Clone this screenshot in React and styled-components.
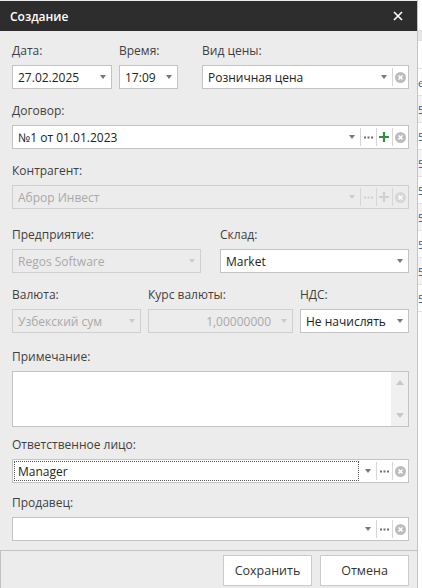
import React from "react";
import styled, { createGlobalStyle } from "styled-components";

const GlobalStyle = createGlobalStyle`
	html, body {
		margin: 0;
		padding: 0;
		background: #fff;
	}
	body {
		font-family: "Open Sans", "Noto Sans", sans-serif;
		font-size: 12px;
		color: #333;
	}
`;

const S = {
	Page: styled.div`
		display: flex;
		width: 422px;
		height: 588px;
		overflow: hidden;
	`,

	Dialog: styled.div`
		width: 418px;
		flex-shrink: 0;
		display: flex;
		flex-direction: column;
		background: #ececec;
		border-right: 1px solid #c4c4c4;
		padding-top: 1px;
		box-sizing: border-box;
	`,

	Header: styled.div`
		height: 30px;
		background: #2d2d2d;
		display: flex;
		align-items: center;
		justify-content: space-between;
		padding: 0 14px 0 10px;
		color: #fff;
		font-weight: 600;
		font-size: 12px;
	`,

	Close: styled.svg`
		width: 10px;
		height: 10px;
	`,

	Body: styled.div`
		display: flex;
		flex-direction: column;
		padding: 12px 8px 9px 12px;
	`,

	Row: styled.div`
		display: grid;
		grid-template-columns: ${(p) => p.$cols || "1fr"};
		column-gap: ${(p) => p.$gap || 7}px;
		margin-top: ${(p) => p.$mt ?? 14}px;
	`,

	Field: styled.div`
		display: flex;
		flex-direction: column;
		min-width: 0;
		margin-left: ${(p) => p.$offset || 0}px;
	`,

	Label: styled.div`
		height: 16px;
		line-height: 16px;
		margin-bottom: 6px;
		color: #3f3f3f;
		white-space: nowrap;
	`,

	Combo: styled.div`
		height: 24px;
		box-sizing: border-box;
		display: flex;
		align-items: stretch;
		background: ${(p) => (p.$disabled ? "#ececec" : "#fff")};
		border: 1px solid ${(p) => (p.$disabled ? "#d0d0d0" : "#c3c3c3")};
	`,

	Value: styled.div`
		flex: 1;
		min-width: 0;
		display: flex;
		align-items: center;
		justify-content: ${(p) => (p.$right ? "flex-end" : "flex-start")};
		padding: 0 4px;
		margin: 1px;
		white-space: nowrap;
		overflow: hidden;
		color: ${(p) => (p.$disabled ? "#a9a9a9" : "#222")};
		font-size: 12px;
		outline: ${(p) => (p.$focused ? "1px dotted #555" : "none")};
		outline-offset: -1px;
	`,

	Arrow: styled.div`
		width: 16px;
		flex-shrink: 0;
		display: flex;
		align-items: center;
		justify-content: center;
		&::after {
			content: "";
			border-left: 3.5px solid transparent;
			border-right: 3.5px solid transparent;
			border-top: 4px solid ${(p) => (p.$disabled ? "#cacaca" : "#777")};
		}
	`,

	Button: styled.div`
		width: 16px;
		flex-shrink: 0;
		display: flex;
		align-items: center;
		justify-content: center;
		position: relative;
		&::before {
			content: "";
			position: absolute;
			left: 0;
			top: 2px;
			bottom: 2px;
			border-left: 1px solid #d6d6d6;
		}
	`,

	TextArea: styled.div`
		height: 56px;
		box-sizing: border-box;
		display: flex;
		background: #fff;
		border: 1px solid #c3c3c3;
	`,

	Scroll: styled.div`
		margin-left: auto;
		width: 17px;
		background: #f0f0f0;
		display: flex;
		flex-direction: column;
		justify-content: space-between;
		align-items: center;
		padding: 8px 0;
	`,

	ScrollArrow: styled.div`
		border-left: 4px solid transparent;
		border-right: 4px solid transparent;
		${(p) => (p.$up ? "border-bottom" : "border-top")}: 5px solid #c8c8c8;
	`,

	Footer: styled.div`
		border-top: 1px solid #c2c2c2;
		border-left: 1px solid #c2c2c2;
		display: flex;
		justify-content: flex-end;
		gap: 8px;
		padding: 4px 8px 0 0;
		flex: 1;
	`,

	Action: styled.button`
		width: 89px;
		height: 31px;
		background: #fff;
		border: 1px solid #cacaca;
		font-family: inherit;
		font-size: 12.5px;
		color: #333;
		padding: 0;
	`,

	Backdrop: styled.div`
		flex: 1;
		display: flex;
		flex-direction: column;
		background: #fff;
		overflow: hidden;
	`,

	BackRow: styled.div`
		height: ${(p) => p.$h}px;
		flex-shrink: 0;
		box-sizing: border-box;
		line-height: ${(p) => p.$h}px;
		background: ${(p) => p.$bg || "#fff"};
		border-bottom: 1px solid #e2e2e2;
		color: #2b5a9c;
		font-size: 11px;
		white-space: nowrap;
	`,
};

const Clear = ({ disabled }) => (
	<svg width="11" height="11" viewBox="0 0 12 12">
		<circle cx="6" cy="6" r="6" fill={disabled ? "#d6d6d6" : "#bcbcbc"} />
		<path d="M3.8 3.8 L8.2 8.2 M8.2 3.8 L3.8 8.2" stroke="#fff" strokeWidth="1.6" />
	</svg>
);

const Dots = ({ disabled }) => (
	<svg width="9" height="3" viewBox="0 0 9 3">
		{[1, 4.5, 8].map((x) => (
			<rect key={x} x={x - 1} y="0.5" width="2" height="2" fill={disabled ? "#cfcfcf" : "#6f6f6f"} />
		))}
	</svg>
);

const Plus = ({ disabled }) => (
	<svg width="10" height="10" viewBox="0 0 10 10">
		<path d="M5 0 V10 M0 5 H10" stroke={disabled ? "#cfcfcf" : "#2f8f46"} strokeWidth="2.2" />
	</svg>
);

const Combo = ({ value, disabled, buttons = [], focused, right }) => (
	<S.Combo $disabled={disabled}>
		<S.Value $disabled={disabled} $focused={focused} $right={right}>
			{value}
		</S.Value>
		<S.Arrow $disabled={disabled} />
		{buttons.map((b) => (
			<S.Button key={b}>
				{b === "dots" && <Dots disabled={disabled} />}
				{b === "plus" && <Plus disabled={disabled} />}
				{b === "clear" && <Clear disabled={disabled} />}
			</S.Button>
		))}
	</S.Combo>
);

const Field = ({ label, offset, children }) => (
	<S.Field $offset={offset}>
		<S.Label>{label}</S.Label>
		{children}
	</S.Field>
);

// the list page behind the dialog, only a few pixels of it show
const backRows = [
	{ h: 31, bg: "#fff", t: "" },
	{ h: 10, bg: "#e6e6e6", t: "" },
	{ h: 28, bg: "#fff", t: "" },
	{ h: 27, bg: "#fff", t: "e" },
	...Array.from({ length: 8 }, (_, i) => ({ h: 27, bg: i % 2 ? "#fff" : "#f4f4f4", t: "5" })),
	{ h: 300, bg: "#fff", t: "" },
];

export default function App() {
	return (
		<>
			<GlobalStyle />
			<S.Page>
				<S.Dialog>
					<S.Header>
						<span>Создание</span>
						<S.Close viewBox="0 0 10 10">
							<path d="M1 1 L9 9 M9 1 L1 9" stroke="#fff" strokeWidth="1.6" />
						</S.Close>
					</S.Header>

					<S.Body>
						<S.Row $cols="100px 59px 1fr" $mt={0}>
							<Field label="Дата:">
								<Combo value="27.02.2025" />
							</Field>
							<Field label="Время:">
								<Combo value="17:09" />
							</Field>
							<Field label="Вид цены:" offset={17}>
								<Combo value="Розничная цена" buttons={["clear"]} />
							</Field>
						</S.Row>

						<S.Row>
							<Field label="Договор:">
								<Combo value="№1 от 01.01.2023" buttons={["dots", "plus", "clear"]} />
							</Field>
						</S.Row>

						<S.Row>
							<Field label="Контрагент:">
								<Combo value="Аброр Инвест" disabled buttons={["dots", "plus", "clear"]} />
							</Field>
						</S.Row>

						<S.Row $cols="1fr 1fr" $gap={19} $mt={18}>
							<Field label="Предприятие:">
								<Combo value="Regos Software" disabled />
							</Field>
							<Field label="Склад:">
								<Combo value="Market" />
							</Field>
						</S.Row>

						<S.Row $cols="129px 145px 1fr">
							<Field label="Валюта:">
								<Combo value="Узбекский сум" disabled />
							</Field>
							<Field label="Курс валюты:">
								<Combo value="1,00000000" disabled right />
							</Field>
							<Field label="НДС:">
								<Combo value="Не начислять" />
							</Field>
						</S.Row>

						<S.Row $mt={16}>
							<Field label="Примечание:">
								<S.TextArea>
									<S.Scroll>
										<S.ScrollArrow $up />
										<S.ScrollArrow />
									</S.Scroll>
								</S.TextArea>
							</Field>
						</S.Row>

						<S.Row $mt={10}>
							<Field label="Ответственное лицо:">
								<Combo value="Manager" focused buttons={["dots", "clear"]} />
							</Field>
						</S.Row>

						<S.Row $mt={12}>
							<Field label="Продавец:">
								<Combo value="" buttons={["dots", "clear"]} />
							</Field>
						</S.Row>
					</S.Body>

					<S.Footer>
						<S.Action>Сохранить</S.Action>
						<S.Action>Отмена</S.Action>
					</S.Footer>
				</S.Dialog>

				<S.Backdrop>
					{backRows.map((r, i) => (
						<S.BackRow key={i} $h={r.h} $bg={r.bg}>
							{r.t}
						</S.BackRow>
					))}
				</S.Backdrop>
			</S.Page>
		</>
	);
}
